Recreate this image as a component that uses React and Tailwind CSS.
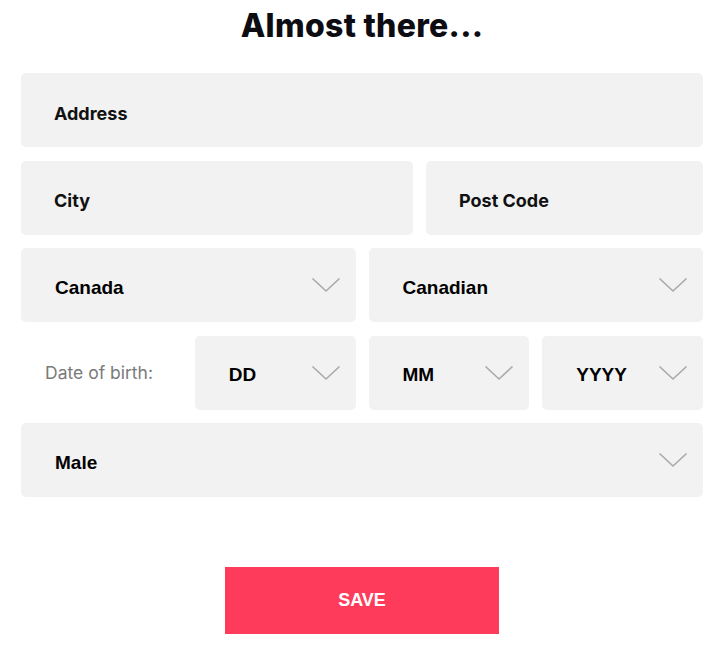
import React, { useState } from 'react';

const inputFont = { fontFamily: 'Inter, "Noto Sans", sans-serif' };

function Chevron() {
  return (
    <svg width="30" height="16" viewBox="0 0 30 16" fill="none" className="shrink-0">
      <path d="M1.5 1.5 L15 14 L28.5 1.5" stroke="#a9a9a9" strokeWidth="1.6" />
    </svg>
  );
}

function Field({ placeholder }) {
  return (
    <input
      type="text"
      placeholder={placeholder}
      className="h-[74px] w-full rounded-[5px] bg-[#f2f2f2] pl-[33px] pt-[6px] text-[18px] font-bold text-black placeholder:text-[#111] outline-none"
      style={inputFont}
    />
  );
}

function Select({ value, options, className = '' }) {
  const [v, setV] = useState(value);
  return (
    <div className={`relative flex h-[74px] items-center justify-between rounded-[5px] bg-[#f2f2f2] pl-[34px] pr-[15px] ${className}`}>
      <span className="pt-[6px] font-['Liberation_Sans',Arial,sans-serif] text-[19px] font-bold text-black">{v}</span>
      <Chevron />
      <select
        value={v}
        onChange={(e) => setV(e.target.value)}
        className="absolute inset-0 cursor-pointer opacity-0"
      >
        {options.map((o) => (
          <option key={o}>{o}</option>
        ))}
      </select>
    </div>
  );
}

export default function App() {
  return (
    <div className="min-h-screen bg-white">
      <div className="mx-[21px] w-[682px]">
        <h1
          className="pt-[6px] text-center text-[32px] font-extrabold leading-[40px] tracking-[0.3px] text-[#0c0c12]"
          style={{ fontFamily: 'Inter, "Noto Sans", sans-serif', fontFeatureSettings: '"calt" 0' }}
        >
          Almost there...
        </h1>

        <div className="mt-[27px] flex flex-col gap-[13.5px]">
          <Field placeholder="Address" />

          <div className="grid grid-cols-[392px_1fr] gap-[13px]">
            <Field placeholder="City" />
            <Field placeholder="Post Code" />
          </div>

          <div className="grid grid-cols-2 gap-[13px]">
            <Select value="Canada" options={['Canada', 'United States', 'United Kingdom']} />
            <Select value="Canadian" options={['Canadian', 'American', 'British']} />
          </div>

          <div className="grid grid-cols-4 gap-[13px]">
            <div className="flex items-center pl-[24px] pt-[2px] text-[17.5px] text-[#7a7a7a]" style={inputFont}>
              Date of birth:
            </div>
            <Select value="DD" options={['DD', ...Array.from({ length: 31 }, (_, i) => String(i + 1))]} />
            <Select value="MM" options={['MM', ...Array.from({ length: 12 }, (_, i) => String(i + 1))]} />
            <Select value="YYYY" options={['YYYY', '2000', '1999', '1998']} />
          </div>

          <Select value="Male" options={['Male', 'Female', 'Other']} />
        </div>

        <div className="mt-[70px] flex justify-center">
          <button
            type="button"
            className="h-[67px] w-[274px] bg-[#ff3b5b] font-['Liberation_Sans',Arial,sans-serif] text-[18px] font-bold text-white"
          >
            SAVE
          </button>
        </div>
      </div>
    </div>
  );
}
